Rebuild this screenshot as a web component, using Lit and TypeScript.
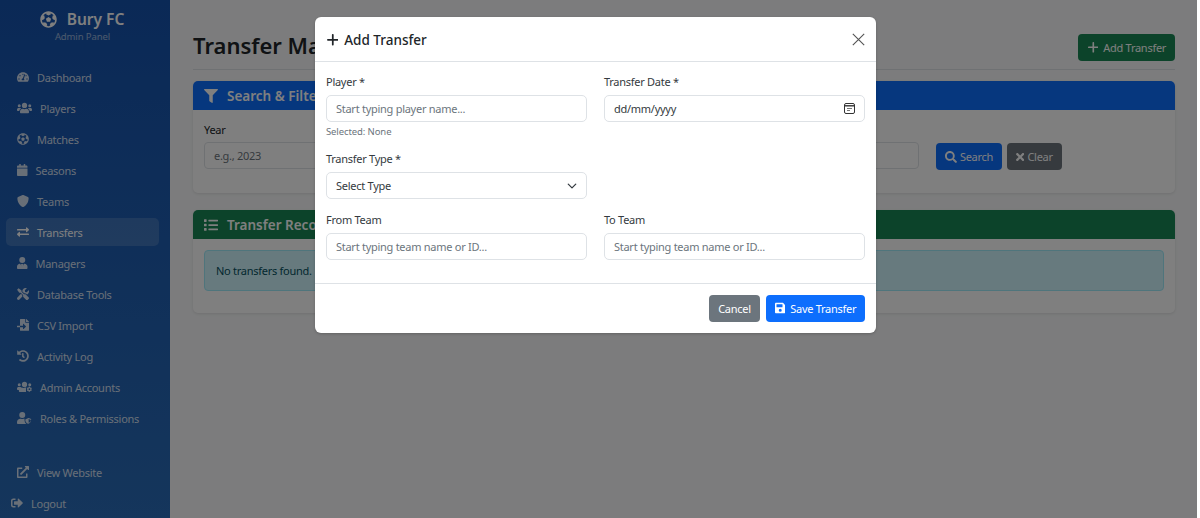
import { LitElement, html, css } from "lit";
import { customElement } from "lit/decorators.js";

const ic = (vb: string, d: string, cls = "") => html`<svg class="ic ${cls}" viewBox="${vb}" fill="currentColor"><path d="${d}"></path></svg>`;
const P = {
  ball: "M504 256c0 137-111 248-248 248S8 393 8 256 119 8 256 8s248 111 248 248zm-48 0l-.003-.282-26.064 22.741-62.679-58.5 16.454-84.355 34.303 3.072c-24.889-34.216-60.004-60.089-100.709-73.141l13.651 31.939L256 139l-74.953-41.525 13.651-31.939c-40.631 13.028-75.78 38.87-100.709 73.141l34.565-3.073 16.192 84.355-62.678 58.5-26.064-22.741-.003.282c0 43.015 13.497 83.952 38.472 117.991l7.704-33.897 85.138 10.447 36.301 77.826-29.902 17.786c40.202 13.122 84.29 13.148 124.572 0l-29.902-17.786 36.301-77.826 85.138-10.447 7.704 33.897C442.503 339.952 456 299.015 456 256zm-248.102 69.571l-29.894-91.312L256 177.732l77.996 56.527-29.622 91.312h-96.476z",
  gauge: "M288 32C128.94 32 0 160.94 0 320c0 52.8 14.25 102.26 39.06 144.8 5.61 9.62 16.3 15.2 27.44 15.2h443c11.14 0 21.83-5.58 27.44-15.2C561.75 422.26 576 372.8 576 320c0-159.06-128.94-288-288-288zm0 64c14.71 0 26.58 10.13 30.32 23.65-1.11 2.26-2.64 4.23-3.45 6.67l-9.22 27.67c-5.13 3.49-10.97 6.01-17.64 6.01-17.67 0-32-14.33-32-32S270.33 96 288 96zM96 384c-17.67 0-32-14.33-32-32s14.33-32 32-32 32 14.33 32 32-14.33 32-32 32zm48-160c-17.67 0-32-14.33-32-32s14.33-32 32-32 32 14.33 32 32-14.33 32-32 32zm246.77-72.41l-61.33 184C343.13 347.33 352 364.54 352 384c0 11.72-3.38 22.55-8.88 32H232.88c-5.5-9.45-8.88-20.28-8.88-32 0-33.94 26.5-61.43 59.9-63.59l61.34-184.01c4.17-12.56 17.73-19.45 30.36-15.17 12.57 4.19 19.35 17.79 15.17 30.36zm14.66 57.2l15.52-46.55c3.47-1.29 7.13-2.23 11.05-2.23 17.67 0 32 14.33 32 32s-14.33 32-32 32c-11.38-.01-20.89-6.28-26.57-15.22zM480 384c-17.67 0-32-14.33-32-32s14.33-32 32-32 32 14.33 32 32-14.33 32-32 32z",
  users: "M96 224a64 64 0 1 0 0-128 64 64 0 0 0 0 128zm448 0a64 64 0 1 0 0-128 64 64 0 0 0 0 128zm32 32h-64c-18 0-34 7-45 19 40 22 69 62 75 109h66c18 0 32-14 32-32v-32c0-35-29-64-64-64zm-256 0a112 112 0 1 0 0-224 112 112 0 0 0 0 224zm77 32h-8c-21 10-44 16-69 16s-48-6-69-16h-8c-64 0-115 52-115 115v29c0 26 21 48 48 48h288c27 0 48-22 48-48v-29c0-63-51-115-115-115zm-224-13c-11-12-27-19-45-19H64c-35 0-64 29-64 64v32c0 18 14 32 32 32h66c6-47 35-87 75-109z",
  cal: "M12 192h424c7 0 12 5 12 12v260c0 26-22 48-48 48H48c-26 0-48-22-48-48V204c0-7 5-12 12-12zm436-44v-36c0-26-22-48-48-48h-48V12c0-7-5-12-12-12h-40c-7 0-12 5-12 12v52H160V12c0-7-5-12-12-12h-40c-7 0-12 5-12 12v52H48C22 64 0 86 0 112v36c0 7 5 12 12 12h424c7 0 12-5 12-12z",
  shield: "M466 84 274 4a48 48 0 0 0-37 0L45 84c-18 7-29 25-29 44 0 199 115 336 222 380a48 48 0 0 0 37 0c85-35 221-159 221-380 0-19-12-37-30-44z",
  swap: "M0 168v-16c0-13 11-24 24-24h360V80c0-21 26-32 41-17l80 80c9 9 9 25 0 34l-80 80c-15 15-41 4-41-17v-48H24c-13 0-24-11-24-24zm488 152H128v-48c0-21-26-32-41-17L7 335c-9 9-9 25 0 34l80 80c15 15 41 4 41-17v-48h360c13 0 24-11 24-24v-16c0-13-11-24-24-24z",
  tie: "M224 256a128 128 0 1 0 0-256 128 128 0 0 0 0 256zm96 32h-17l-57 112 32-80-54-32h-8l-54 32 32 80-57-112h-17C57 288 0 345 0 416v48c0 26 22 48 48 48h352c26 0 48-22 48-48v-48c0-71-57-128-128-128z",
  tools: "M502 402 385 285c-23-23-57-27-85-14L194 165V104L67 8 3 72l96 128h61l106 106c-12 28-9 62 14 85l117 117c15 15 38 15 52 0l53-53c14-15 14-38 0-53zM332 224c28 0 55 11 75 31l19 19c16-7 31-17 44-30 37-37 50-89 38-136-2-9-13-12-20-5l-74 74-68-11-11-68 74-74c7-7 3-18-6-20-47-12-99 1-136 38-28 28-41 65-41 102l82 82c8-1 16-2 24-2zM228 306l-57-57L18 402c-24 24-24 63 0 87s63 24 87 0l124-124c-8-19-8-40-1-59z",
  csv: "M16 288c-9 0-16 7-16 16v32c0 9 7 16 16 16h112v-64H16zm489-183L407 7c-5-4-11-7-17-7h-6v128h128v-6c0-6-3-12-7-17zM352 136V0H152c-13 0-24 11-24 24v264h128v-65c0-14 17-21 27-11l96 96c6 7 6 17 0 23l-96 96c-10 10-27 3-27-11v-64H128v128c0 13 11 24 24 24h336c13 0 24-11 24-24V160H376c-13 0-24-11-24-24z",
  hist: "M504 255c0 137-111 249-248 249-64 0-123-24-167-64-5-5-6-13-1-18l34-34c5-4 12-5 17-1 31 27 72 44 117 44 97 0 176-79 176-176S353 79 256 79c-47 0-89 18-121 48l50 50c10 10 3 27-11 27H24c-9 0-16-7-16-16V38c0-14 17-21 27-11l49 49C129 33 189 8 256 8c137 0 248 110 248 247zm-189 79 10-13c8-11 6-26-4-34l-41-32V152c0-13-11-24-24-24h-16c-13 0-24 11-24 24v135l65 51c11 8 26 6 34-4z",
  admin: "M96 224a64 64 0 1 0 0-128 64 64 0 0 0 0 128zm224 32a112 112 0 1 0 0-224 112 112 0 0 0 0 224zm224-32a64 64 0 1 0 0-128 64 64 0 0 0 0 128zM384 480V336c0-18 6-34 17-47-16-7-33-11-52-11h-8c-21 10-44 16-69 16s-48-6-69-16h-8c-64 0-115 52-115 115v29c0 26 21 48 48 48h256zM173 275c-11-12-27-19-45-19H64c-35 0-64 29-64 64v32c0 18 14 32 32 32h66c6-47 35-87 75-109zm451 93-12-7c1-7 1-14 0-20l12-7c5-3 7-9 5-14-5-16-13-30-24-42-4-4-10-5-15-2l-12 7c-5-4-11-8-18-10v-14c0-6-4-10-10-12-16-4-32-4-48 0-6 2-10 6-10 12v14c-7 2-13 6-18 10l-12-7c-5-3-11-2-15 2-11 12-19 26-24 42-2 5 0 11 5 14l12 7c-1 6-1 13 0 20l-12 7c-5 3-7 9-5 14 5 16 13 30 24 42 4 4 10 5 15 2l12-7c5 4 11 8 18 10v14c0 6 4 10 10 12 16 4 32 4 48 0 6-2 10-6 10-12v-14c7-2 13-6 18-10l12 7c5 3 11 2 15-2 11-12 19-26 24-42 2-5 0-11-5-14zm-93 20a38 38 0 1 1 0-76 38 38 0 0 1 0 76z",
  roles: "M224 256a128 128 0 1 0 0-256 128 128 0 0 0 0 256zm96 64c0-11 2-21 5-31-8-1-16-1-24-1h-17c-18 8-38 13-60 13s-42-5-60-13h-17C65 288 0 353 0 435v29c0 26 22 48 48 48h352c-50-40-80-102-80-192zm306-16-120-48a24 24 0 0 0-18 0l-120 48c-9 4-15 12-15 22 0 88 53 149 115 174 6 2 12 2 18 0 50-20 115-75 115-174 0-10-6-18-15-22zm-129 155V301l96 38c-5 66-48 106-96 120z",
  ext: "M432 320h-32c-9 0-16 7-16 16v112H64V128h144c9 0 16-7 16-16V80c0-9-7-16-16-16H48C22 64 0 86 0 112v352c0 26 22 48 48 48h352c26 0 48-22 48-48V336c0-9-7-16-16-16zM488 0H360c-21 0-32 26-17 41l36 36-244 243c-9 10-9 25 0 34l23 23c9 9 24 9 34 0l243-244 36 36c15 15 41 4 41-17V24c0-13-11-24-24-24z",
  logout: "M497 273 329 441c-15 15-41 4-41-17v-96H152c-13 0-24-11-24-24v-96c0-13 11-24 24-24h136V88c0-21 26-32 41-17l168 168c9 10 9 24 0 34zM192 436v-40c0-7-5-12-12-12H96c-18 0-32-14-32-32V160c0-18 14-32 32-32h84c7 0 12-5 12-12V76c0-7-5-12-12-12H96c-53 0-96 43-96 96v192c0 53 43 96 96 96h84c7 0 12-5 12-12z",
  filter: "M487 0H25C3 0-8 26 8 41l184 184v205c0 8 4 15 10 20l80 56c16 11 38 0 38-20V225L504 41c16-15 5-41-17-41z",
  list: "M80 368H16c-9 0-16 7-16 16v64c0 9 7 16 16 16h64c9 0 16-7 16-16v-64c0-9-7-16-16-16zm0-320H16C7 48 0 55 0 64v64c0 9 7 16 16 16h64c9 0 16-7 16-16V64c0-9-7-16-16-16zm0 160H16c-9 0-16 7-16 16v64c0 9 7 16 16 16h64c9 0 16-7 16-16v-64c0-9-7-16-16-16zm416 176H176c-9 0-16 7-16 16v32c0 9 7 16 16 16h320c9 0 16-7 16-16v-32c0-9-7-16-16-16zm0-320H176c-9 0-16 7-16 16v32c0 9 7 16 16 16h320c9 0 16-7 16-16V80c0-9-7-16-16-16zm0 160H176c-9 0-16 7-16 16v32c0 9 7 16 16 16h320c9 0 16-7 16-16v-32c0-9-7-16-16-16z",
  plus: "M432 216H280V64c0-13-11-24-24-24h-16c-13 0-24 11-24 24v152H64c-13 0-24 11-24 24v16c0 13 11 24 24 24h152v152c0 13 11 24 24 24h16c13 0 24-11 24-24V280h152c13 0 24-11 24-24v-16c0-13-11-24-24-24z",
  search: "M505 443 405 343c-4-4-10-7-17-7h-16c28-35 44-80 44-128C416 93 323 0 208 0S0 93 0 208s93 208 208 208c48 0 93-16 128-44v16c0 7 3 13 7 17l100 100c9 9 24 9 34 0l28-28c9-10 9-25 0-34zM208 336a128 128 0 1 1 0-256 128 128 0 0 1 0 256z",
  times: "M243 256 343 156c12-12 12-32 0-44l-22-22c-12-12-32-12-44 0L177 190 77 90c-12-12-32-12-44 0L11 112c-12 12-12 32 0 44l100 100L11 356c-12 12-12 32 0 44l22 22c12 12 32 12 44 0l100-100 100 100c12 12 32 12 44 0l22-22c12-12 12-32 0-44z",
  save: "M433 129 351 47c-9-9-21-14-34-14H48C22 32 0 54 0 80v352c0 26 22 48 48 48h352c26 0 48-22 48-48V163c0-13-5-25-15-34zM224 416a64 64 0 1 1 0-128 64 64 0 0 1 0 128zm96-304v100c0 7-5 12-12 12H76c-7 0-12-5-12-12V108c0-7 5-12 12-12h228c3 0 6 1 8 4l4 4c2 2 4 5 4 8z",
};

type NavItem = [string, string, string, boolean?, string?];
const nav: NavItem[] = [
  ["0 0 576 512", P.gauge, "Dashboard", false, "w12"],
  ["0 0 640 512", P.users, "Players"],
  ["0 0 512 512", P.ball, "Matches"],
  ["0 0 448 512", P.cal, "Seasons"],
  ["0 0 512 512", P.shield, "Teams"],
  ["0 0 512 512", P.swap, "Transfers", true],
  ["0 0 448 512", P.tie, "Managers"],
  ["0 0 512 512", P.tools, "Database Tools"],
  ["0 0 512 512", P.csv, "CSV Import"],
  ["0 0 512 512", P.hist, "Activity Log"],
  ["0 0 640 512", P.admin, "Admin Accounts"],
  ["0 0 640 512", P.roles, "Roles & Permissions"],
];

@customElement("app-root")
export class AppRoot extends LitElement {
  static styles = css`
    :host { display: block; width: 1200px; height: 518px; overflow: hidden; position: relative; background: #fff; font-family: "Noto Sans", "Open Sans", sans-serif; color: #212529; font-size: 11px; letter-spacing: -.27px; }
    * { box-sizing: border-box; }
    .ic { display: block; height: 12px; width: auto; flex: none; }
    .w12 { width: 12px; height: 12px; }
    .page { display: flex; width: 1197px; height: 518px; background: #f8f9fa; position: relative; }
    .side { width: 170px; flex: none; height: 518px; background: linear-gradient(180deg, #1552ad 0%, #2a6cb8 100%); color: rgba(255,255,255,.8); display: flex; flex-direction: column; }
    .brand { height: 58px; padding-top: 8px; text-align: center; color: #fff; }
    .brand .t { display: flex; justify-content: center; align-items: center; gap: 10px; font-size: 15.5px; font-weight: 600; line-height: 22px; padding-right: 6px; letter-spacing: 0; }
    .brand .t .ic { height: 17px; }
    .brand small { display: block; font-size: 9.5px; line-height: 12px; opacity: .55; margin-top: 1px; padding-right: 5px; letter-spacing: -.1px; }
    .nav { padding: 5px 11px 0 6px; display: flex; flex-direction: column; gap: 3px; }
    .item { height: 28px; display: flex; align-items: center; padding-left: 11px; gap: 8px; border-radius: 5px; }
    .item.on { background: rgba(255,255,255,.15); color: #fff; }
    .bottom { margin-top: 26px; padding: 0 11px 0 6px; display: flex; flex-direction: column; gap: 3px; }
    .item.out { margin-left: -6px; }
    .main { flex: 1; padding: 22px 22px 0 23px; min-width: 0; }
    .head { display: flex; justify-content: space-between; align-items: flex-start; height: 47.5px; border-bottom: 1px solid #dee2e6; margin-bottom: 11.5px; }
    h1 { margin: 0; font-size: 22px; font-weight: 600; line-height: 30px; margin-top: 8px; letter-spacing: 0; }
    .btn { display: inline-flex; align-items: center; justify-content: center; height: 27px; border-radius: 4px; color: #fff; border: 1px solid transparent; }
    .add { margin-top: 11.5px; width: 97px; background: #198754; gap: 5px; }
    .add .ic { height: 13px; }
    .card { background: #fff; border-radius: 5px; box-shadow: 0 1px 3px rgba(0,0,0,.1); margin-bottom: 17px; overflow: hidden; }
    .ch { height: 29px; display: flex; align-items: center; color: #fff; font-size: 13.5px; font-weight: 600; padding-left: 11px; gap: 9px; letter-spacing: 0; }
    .ch .ic { height: 14px; }
    .blue { background: #0d6efd; }
    .green { background: #198754; }
    .filter { height: 83px; padding: 11px 11px 0; display: flex; }
    .filter label { display: block; line-height: 18px; }
    .fake { height: 27px; border: 1px solid #dee2e6; border-radius: 4px; padding-left: 9px; line-height: 25px; color: #6c757d; margin-top: 3px; background: #fff; }
    .fgrow { flex: 1; }
    .fbtns { display: flex; gap: 5px; margin-top: 22px; margin-left: 17px; margin-right: 102px; }
    .srch { width: 66px; background: #0d6efd; gap: 3px; }
    .clr { width: 55px; background: #6c757d; gap: 3px; }
    .rec { height: 74px; padding: 11px; }
    .alert { height: 41px; border: 1px solid #9eeaf9; background: #cff4fc; border-radius: 4px; color: #055160; padding-left: 11px; line-height: 39px; }
    .backdrop { position: absolute; inset: 0; background: rgba(0,0,0,.5); }
    .modal { position: absolute; left: 315px; top: 17px; width: 561px; height: 315.5px; background: #fff; border-radius: 6px; display: flex; flex-direction: column; box-shadow: 0 1px 3px rgba(0,0,0,.2); }
    .mh { height: 45px; flex: none; border-bottom: 1px solid #dee2e6; display: flex; align-items: center; justify-content: space-between; padding: 0 11px; font-size: 13.5px; font-weight: 500; letter-spacing: 0; }
    .mh .tt { display: flex; align-items: center; gap: 6px; padding-top: 1px; }
    .mh .tt .ic { height: 14px; }
    .mh .x { width: 13px; height: 13px; color: #555; }
    .mb { flex: 1; padding: 11px 11px 0; display: grid; grid-template-columns: 261px 261px; column-gap: 17px; align-content: start; }
    .f label { display: block; line-height: 18px; color: #343a40; }
    .in { height: 27px; border: 1px solid #dee2e6; border-radius: 5px; margin-top: 4px; padding: 0 9px; line-height: 25px; color: #6c757d; display: flex; align-items: center; justify-content: space-between; background: #fff; }
    .in.dark { color: #343a40; }
    .hint { font-size: 9.5px; line-height: 13px; margin-top: 3px; color: #6c757d; letter-spacing: -.1px; }
    .f.b { margin-top: 12px; }
    .f.c { margin-top: 12px; }
    .mf { height: 50px; flex: none; border-top: 1px solid #dee2e6; display: flex; justify-content: flex-end; align-items: center; gap: 6px; padding: 0 11px; }
    .cancel { width: 51px; background: #6c757d; }
    .save { width: 99px; background: #0d6efd; gap: 5px; }
    .save .ic { height: 12px; }
  `;

  render() {
    const item = (n: NavItem) =>
      html`<div class="item ${n[3] ? "on" : ""}">${ic(n[0], n[1], n[4] ?? "")}<span>${n[2]}</span></div>`;
    const calIcon = html`<svg width="11" height="11" viewBox="0 0 11 11" fill="none" stroke="#333" stroke-width="1"><rect x=".5" y=".5" width="10" height="10" rx="1.5"></rect><path d="M1 2.8h9" stroke-width="1.4"></path><path d="M3 5.5h5M3 7.5h3" stroke="#777"></path></svg>`;
    const chev = html`<svg width="10" height="10" viewBox="0 0 16 16" fill="none" stroke="#343a40" stroke-width="2" stroke-linecap="round" stroke-linejoin="round"><path d="m2 5 6 6 6-6"></path></svg>`;
    return html`
      <div class="page">
        <aside class="side">
          <div class="brand">
            <div class="t">${ic("0 0 512 512", P.ball)}<span>Bury FC</span></div>
            <small>Admin Panel</small>
          </div>
          <div class="nav">${nav.map(item)}</div>
          <div class="bottom">
            <div class="item">${ic("0 0 512 512", P.ext)}<span>View Website</span></div>
            <div class="item out">${ic("0 0 512 512", P.logout)}<span>Logout</span></div>
          </div>
        </aside>
        <main class="main">
          <div class="head"><h1>Transfer Management</h1><div class="btn add">${ic("0 0 448 512", P.plus)}<span>Add Transfer</span></div></div>
          <section class="card">
            <div class="ch blue">${ic("0 0 512 512", P.filter)}<span>Search &amp; Filter</span></div>
            <div class="filter">
              <div class="fgrow"><label>Year</label><div class="fake">e.g., 2023</div></div>
              <div class="fbtns">
                <div class="btn srch">${ic("0 0 512 512", P.search)}<span>Search</span></div>
                <div class="btn clr">${ic("0 0 352 512", P.times)}<span>Clear</span></div>
              </div>
            </div>
          </section>
          <section class="card">
            <div class="ch green">${ic("0 0 512 512", P.list)}<span>Transfer Records</span></div>
            <div class="rec"><div class="alert">No transfers found.</div></div>
          </section>
        </main>
        <div class="backdrop"></div>
      </div>
      <div class="modal">
        <div class="mh">
          <div class="tt">${ic("0 0 448 512", P.plus)}<span>Add Transfer</span></div>
          <svg class="x" viewBox="0 0 16 16" fill="none" stroke="currentColor" stroke-width="1.4"><path d="M1 1l14 14M15 1 1 15"></path></svg>
        </div>
        <div class="mb">
          <div class="f"><label>Player *</label><div class="in"><span>Start typing player name...</span></div><div class="hint">Selected: None</div></div>
          <div class="f"><label>Transfer Date *</label><div class="in dark"><span>dd/mm/yyyy</span>${calIcon}</div></div>
          <div class="f b"><label>Transfer Type *</label><div class="in dark"><span>Select Type</span>${chev}</div></div>
          <div></div>
          <div class="f c"><label>From Team</label><div class="in"><span>Start typing team name or ID...</span></div></div>
          <div class="f c"><label>To Team</label><div class="in"><span>Start typing team name or ID...</span></div></div>
        </div>
        <div class="mf">
          <div class="btn cancel">Cancel</div>
          <div class="btn save">${ic("0 0 448 512", P.save)}<span>Save Transfer</span></div>
        </div>
      </div>
    `;
  }
}
